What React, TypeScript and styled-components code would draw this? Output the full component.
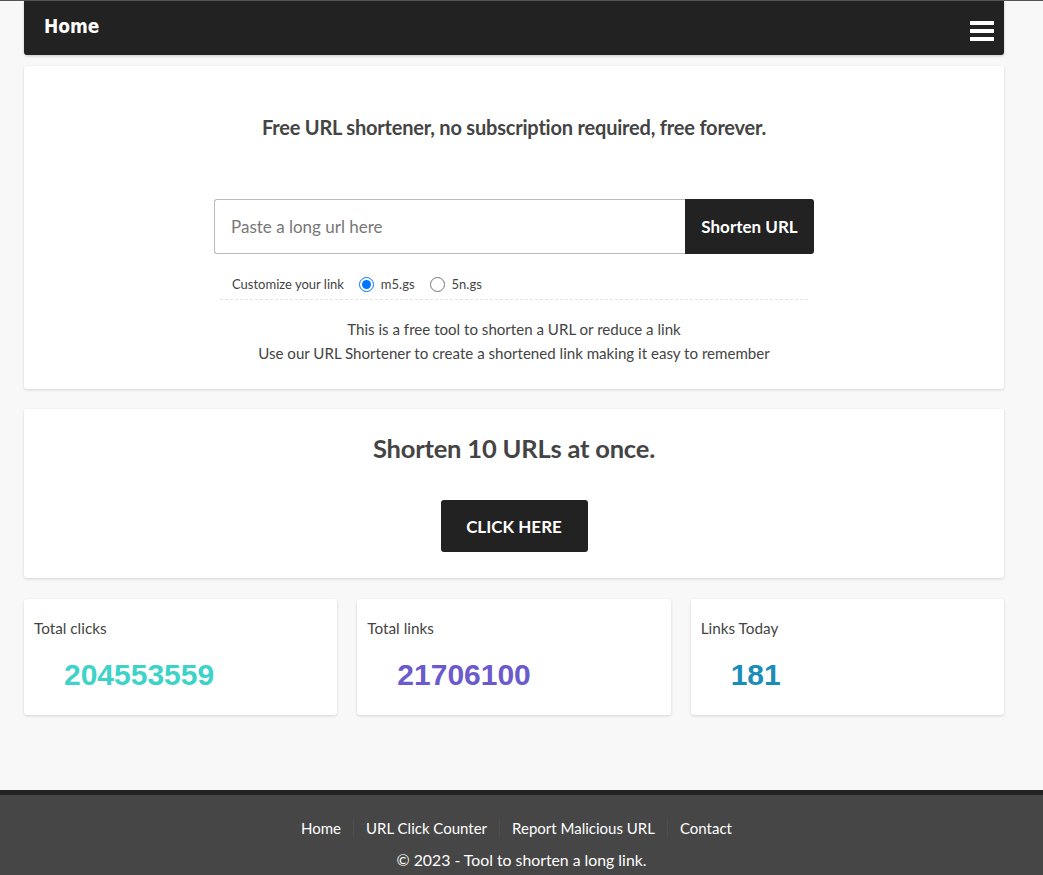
import React from "react";
import styled, { createGlobalStyle } from "styled-components";

const Global = createGlobalStyle`
  html, body { margin: 0; padding: 0; }
  body {
    background: #f8f8f8;
    font-family: Lato, "Liberation Sans", sans-serif;
    color: #444;
    border-top: 1px solid #555;
  }
  * { box-sizing: border-box; }
`;

const Page = styled.div`
  display: flex;
  flex-direction: column;
`;

const Container = styled.main`
  width: 980px;
  margin-left: 24px;
  display: flex;
  flex-direction: column;
  gap: 20px;
`;

const Navbar = styled.nav`
  height: 54px;
  background: #222;
  border-radius: 0 0 3px 3px;
  display: flex;
  align-items: center;
  justify-content: space-between;
  padding: 0 10px 0 20px;
  box-shadow: 0 1px 3px rgba(0, 0, 0, 0.2);
  margin-bottom: -9px;
`;

const Brand = styled.a`
  color: #fff;
  font-family: "DejaVu Sans Condensed", "DejaVu Sans", sans-serif;
  font-weight: bold;
  font-size: 19px;
  text-decoration: none;
  margin-top: -4px;
`;

const Burger = styled.div`
  display: flex;
  flex-direction: column;
  gap: 4px;
  margin-top: 6px;
  span {
    display: block;
    width: 24px;
    height: 4px;
    background: #fff;
  }
`;

const Card = styled.section<{ $pad?: string }>`
  background: #fff;
  border-radius: 3px;
  box-shadow: 0 1px 3px rgba(0, 0, 0, 0.15);
  padding: ${(p) => p.$pad || "0"};
  display: flex;
  flex-direction: column;
  align-items: center;
`;

const Title = styled.h2<{ $size: number }>`
  margin: 0;
  font-family: Lato, sans-serif;
  font-weight: bold;
  font-size: ${(p) => p.$size}px;
  color: #444;
  letter-spacing: -0.2px;
`;

const InputGroup = styled.form`
  display: flex;
  width: 600px;
  height: 55px;
  margin-top: 60px;
`;

const UrlInput = styled.input`
  flex: 1;
  border: 1px solid #bbb;
  border-right: none;
  border-radius: 3px 0 0 3px;
  padding: 0 16px;
  font-family: Lato, sans-serif;
  font-size: 17px;
  color: #333;
  outline: none;
  &::placeholder { color: #777; }
`;

const ShortenBtn = styled.button`
  width: 129px;
  background: #222;
  color: #fff;
  border: none;
  border-radius: 0 3px 3px 0;
  font-family: Lato, sans-serif;
  font-weight: bold;
  font-size: 17px;
`;

const OptionsRow = styled.div`
  width: 588px;
  display: flex;
  align-items: center;
  gap: 15px;
  padding: 22px 0 7px 12px;
  border-bottom: 1px dashed #e4e4e4;
  font-size: 13px;
  color: #444;
`;

const RadioLabel = styled.label`
  display: flex;
  align-items: center;
  gap: 7px;
  input { margin: 0; width: 15px; height: 15px; }
`;

const Info = styled.p`
  margin: 17px 0 24px;
  text-align: center;
  font-size: 15.1px;
  line-height: 24px;
  color: #444;
`;

const ClickBtn = styled.button`
  margin-top: 37px;
  width: 147px;
  height: 52px;
  background: #222;
  color: #fff;
  border: none;
  border-radius: 3px;
  font-family: Lato, sans-serif;
  font-weight: bold;
  font-size: 17px;
`;

const Stats = styled.div`
  display: grid;
  grid-template-columns: repeat(3, 1fr);
  gap: 20px;
  margin-top: 1px;
`;

const StatCard = styled.div`
  background: #fff;
  border-radius: 3px;
  box-shadow: 0 1px 3px rgba(0, 0, 0, 0.15);
  height: 116px;
  padding: 20px 10px 0;
`;

const StatLabel = styled.div`
  font-size: 15.3px;
  color: #444;
`;

const StatValue = styled.div<{ $color: string }>`
  margin: 21px 0 0 30px;
  font-family: "Liberation Sans", Arial, sans-serif;
  font-weight: bold;
  font-size: 30px;
  color: ${(p) => p.$color};
`;

const Footer = styled.footer`
  margin-top: 75px;
  background: #464646;
  border-top: 5px solid #222;
  padding: 24px 0 0;
  height: 90px;
  display: flex;
  flex-direction: column;
  align-items: center;
  color: #fff;
  font-size: 15px;
`;

const FooterLinks = styled.ul`
  list-style: none;
  margin: 0;
  padding: 0 10px 0 0;
  display: flex;
  li {
    padding: 0 12px;
    border-left: 1px solid #4f4f4f;
  }
  li:first-child { border-left: none; }
  a { color: #fff; text-decoration: none; }
`;

const Copy = styled.div`
  margin-top: 13px;
  font-size: 15.8px;
`;

export default function App() {
  return (
    <Page>
      <Global />
      <Container>
        <Navbar>
          <Brand href="#">Home</Brand>
          <Burger>
            <span />
            <span />
            <span />
          </Burger>
        </Navbar>
        <Card $pad="49px 0 0">
          <Title $size={20}>Free URL shortener, no subscription required, free forever.</Title>
          <InputGroup onSubmit={(e) => e.preventDefault()}>
            <UrlInput placeholder="Paste a long url here" />
            <ShortenBtn type="submit">Shorten URL</ShortenBtn>
          </InputGroup>
          <OptionsRow>
            <span>Customize your link</span>
            <RadioLabel>
              <input type="radio" name="dom" defaultChecked /> m5.gs
            </RadioLabel>
            <RadioLabel>
              <input type="radio" name="dom" /> 5n.gs
            </RadioLabel>
          </OptionsRow>
          <Info>
            This is a free tool to shorten a URL or reduce a link
            <br />
            Use our URL Shortener to create a shortened link making it easy to remember
          </Info>
        </Card>
        <Card $pad="24px 0 26px">
          <Title $size={25.5}>Shorten 10 URLs at once.</Title>
          <ClickBtn>CLICK HERE</ClickBtn>
        </Card>
        <Stats>
          <StatCard>
            <StatLabel>Total clicks</StatLabel>
            <StatValue $color="#3dd3c9">204553559</StatValue>
          </StatCard>
          <StatCard>
            <StatLabel>Total links</StatLabel>
            <StatValue $color="#6a5acd">21706100</StatValue>
          </StatCard>
          <StatCard>
            <StatLabel>Links Today</StatLabel>
            <StatValue $color="#1a8db8">181</StatValue>
          </StatCard>
        </Stats>
      </Container>
      <Footer>
        <FooterLinks>
          <li><a href="#">Home</a></li>
          <li><a href="#">URL Click Counter</a></li>
          <li><a href="#">Report Malicious URL</a></li>
          <li><a href="#">Contact</a></li>
        </FooterLinks>
        <Copy>© 2023 - Tool to shorten a long link.</Copy>
      </Footer>
    </Page>
  );
}
